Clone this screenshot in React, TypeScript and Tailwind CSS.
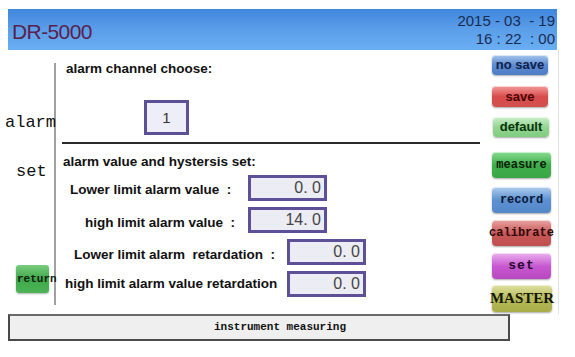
import React from "react";

const sans = { fontFamily: '"Liberation Sans", Arial, sans-serif' };
const mono = { fontFamily: '"Liberation Mono", "Courier New", monospace' };
const serif = { fontFamily: '"Liberation Serif", "Times New Roman", serif' };

type BtnProps = {
  label: string;
  className: string;
  textClass?: string;
  font?: React.CSSProperties;
};

const SideButton = ({ label, className, textClass = "", font = mono }: BtnProps) => (
  <div
    className={`flex items-center justify-center rounded-[4px] shadow-[inset_0_1px_0_rgba(255,255,255,0.6),0_1px_2px_rgba(0,0,0,0.35)] whitespace-nowrap ${className}`}
  >
    <span className={`font-bold ${textClass}`} style={font}>
      {label}
    </span>
  </div>
);

const ValueBox = ({ value, className = "" }: { value: string; className?: string }) => (
  <div
    className={`flex h-[26px] w-[79px] items-center justify-end border-[3px] border-[#5e5096] bg-[#ececf4] pr-[3px] text-[16px] font-normal text-[#444] whitespace-pre ${className}`}
    style={sans}
  >
    {value}
  </div>
);

const App = () => {
  return (
    <div className="h-[357px] w-[575px] overflow-hidden bg-white" style={sans}>
      {/* header */}
      <div className="mx-[8px] mt-[9px] flex h-[41px] w-[549px] items-center justify-between bg-linear-to-b from-[#3f86dc] via-[#5b9ee9] to-[#6aaef2] pl-[4px] pr-[2px]">
        <span className="mt-[4px] text-[21px] tracking-[-0.6px] text-[#5a1f4e]">DR-5000</span>
        <div className="flex flex-col items-end text-[15px] leading-[18px] text-[#1a2b52] whitespace-pre">
          <span>2015 - 03  - 19</span>
          <span>16 : 22  : 00</span>
        </div>
      </div>

      {/* main */}
      <div className="flex h-[264px]">
        {/* left column */}
        <div className="mt-[13px] flex h-[242px] w-[56px] shrink-0 flex-col border-r-2 border-[#a0a0a0] text-[#111]">
          <span className="mt-[50px] pl-[5px] text-[17px] leading-[20px]" style={mono}>
            alarm
          </span>
          <span className="mt-[29px] pl-[16px] text-[17px] leading-[20px]" style={mono}>
            set
          </span>
          <div className="ml-[16px] mt-[83px] flex h-[28px] w-[33px] items-center rounded-[3px] bg-linear-to-b from-[#78cc7e] via-[#3ea848] to-[#4cb456] shadow-[0_1px_2px_rgba(0,0,0,0.3)]">
            <span className="pl-[1px] text-[11px] font-bold text-[#102010]" style={mono}>
              return
            </span>
          </div>
        </div>

        {/* center */}
        <div className="flex flex-1 flex-col text-[13.5px] font-bold leading-[16px] text-[#111]">
          <span className="ml-[10px] mt-[11px]">alarm channel choose:</span>
          <div className="ml-[88px] mt-[23px] flex h-[35px] w-[45px] items-center justify-center border-[3px] border-[#5e5096] bg-[#eeeef8] text-[15px] font-normal text-[#333]">
            1
          </div>
          <div className="ml-[6px] mr-[12px] mt-[7px] h-[2px] bg-[#2a2a2a]" />
          <span className="ml-[7px] mt-[10px]">alarm value and hystersis set:</span>

          <div className="mt-[5px] flex items-center">
            <span className="w-[192px] pl-[14px] pt-[3px] whitespace-pre">Lower limit alarm value  :</span>
            <ValueBox value="0. 0" />
          </div>
          <div className="mt-[6px] flex items-center">
            <span className="w-[192px] pl-[29px] pt-[6px] whitespace-pre">high limit alarm value  :</span>
            <ValueBox value="14. 0" />
          </div>
          <div className="mt-[6px] flex items-center">
            <span className="w-[231px] pl-[18px] pt-[5px] whitespace-pre">Lower limit alarm  retardation  :</span>
            <ValueBox value="0. 0" />
          </div>
          <div className="mt-[6px] flex items-center">
            <span className="w-[231px] pl-[9px] whitespace-pre">high limit alarm value retardation</span>
            <ValueBox value="0. 0" />
          </div>
        </div>

        {/* right buttons */}
        <div className="mr-[16px] flex w-[67px] shrink-0 flex-col border-r border-[#e2e2e2]">
          <SideButton
            label="no save"
            font={sans}
            className="mt-[5px] h-[20px] w-[56px] bg-linear-to-b from-[#a8c6ee] via-[#5d8ad0] to-[#4d7cc4]"
            textClass="text-[13px] text-[#0f1f48]"
          />
          <SideButton
            label="save"
            font={sans}
            className="mt-[11px] h-[21px] w-[56px] bg-linear-to-b from-[#f29a9a] via-[#d84c4c] to-[#d25050]"
            textClass="text-[13px] text-[#4a0606]"
          />
          <SideButton
            label="default"
            font={sans}
            className="mt-[10px] h-[20px] w-[56px] ml-[1px] bg-linear-to-b from-[#cdeecd] via-[#92d692] to-[#80cc80]"
            textClass="text-[13px] text-[#0a340a]"
          />
          <SideButton
            label="measure"
            className="mt-[15px] h-[26px] w-[59px] bg-linear-to-b from-[#86dc90] via-[#3eae4a] to-[#3aa646]"
            textClass="text-[12px] text-[#0a220a]"
          />
          <SideButton
            label="record"
            className="mt-[9px] h-[26px] w-[59px] bg-linear-to-b from-[#b0ceef] via-[#5c90d0] to-[#5488c8]"
            textClass="text-[12px] text-[#0a1836]"
          />
          <SideButton
            label="calibrate"
            className="mt-[7px] h-[26px] w-[59px] bg-linear-to-b from-[#eaa4a4] via-[#c85858] to-[#c05050]"
            textClass="text-[12px] text-[#300808]"
          />
          <SideButton
            label="set"
            className="mt-[7px] h-[26px] w-[59px] bg-linear-to-b from-[#eab0ee] via-[#c858d0] to-[#b848c0]"
            textClass="text-[13px] tracking-[1px] text-[#24082e]"
          />
          <SideButton
            label="MASTER"
            font={serif}
            className="mt-[6px] h-[27px] w-[60px] bg-linear-to-b from-[#e0e0a0] via-[#b8bc58] to-[#a8ac48]"
            textClass="text-[15px] text-[#161608]"
          />
        </div>
      </div>

      {/* status bar */}
      <div className="ml-[8px] flex h-[27px] w-[502px] items-center justify-center border-2 border-[#4a4a4a] border-t-[#6a6a6a] bg-[#efefef] pl-[42px]">
        <span className="text-[11px] font-bold text-[#111]" style={mono}>
          instrument measuring
        </span>
      </div>
    </div>
  );
};

export default App;
